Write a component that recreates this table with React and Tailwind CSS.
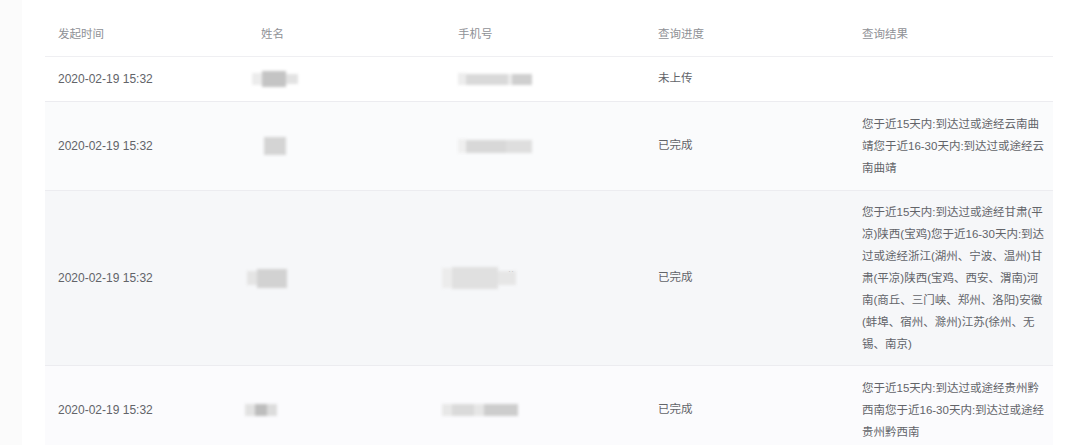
import React from 'react';

const font = "font-['Liberation_Sans','Noto_Sans_CJK_SC',sans-serif]";

// blurred placeholder for masked names / phone numbers
const Masked = ({ parts, className = '' }) => (
  <div className={`flex items-center blur-[1.5px] ${className}`}>
    {parts.map((p, i) => (
      <div key={i} className={p} />
    ))}
  </div>
);

const rows = [
  {
    bg: 'bg-white',
    pad: 'py-[11px]',
    status: '未上传',
    name: (
      <Masked
        className="-ml-[9px]"
        parts={['w-[10px] h-[12px] bg-[#ececec]', 'w-[24px] h-[16px] bg-[#c4c4c4]', 'w-[12px] h-[10px] bg-[#e2e2e2]']}
      />
    ),
    phone: (
      <Masked
        parts={['w-[8px] h-[12px] bg-[#ededed]', 'w-[42px] h-[11px] bg-[#d9d9d9]', 'w-[4px] h-[11px] bg-[#ececec]', 'w-[20px] h-[11px] bg-[#cfcfcf]']}
      />
    ),
    result: [],
  },
  {
    bg: 'bg-[#fafbfc]',
    pad: 'py-[11px]',
    status: '已完成',
    name: <Masked className="ml-[3px]" parts={['w-[22px] h-[18px] bg-[#d4d4d4]']} />,
    phone: (
      <Masked
        parts={['w-[8px] h-[14px] bg-[#efefef]', 'w-[40px] h-[13px] bg-[#d8d8d8]', 'w-[26px] h-[13px] bg-[#dedede]']}
      />
    ),
    result: ['您于近15天内:到达过或途经云南曲', '靖您于近16-30天内:到达过或途经云', '南曲靖'],
  },
  {
    bg: 'bg-[#f6f7f9]',
    pad: 'py-[10px]',
    status: '已完成',
    name: (
      <Masked
        className="-ml-[14px]"
        parts={['w-[10px] h-[14px] bg-[#e4e4e4]', 'w-[30px] h-[19px] bg-[#d2d2d2]']}
      />
    ),
    phone: (
      <div className="flex items-start -ml-[16px]">
        <Masked parts={['w-[10px] h-[20px] bg-[#ececec]', 'w-[46px] h-[22px] bg-[#e0e0e0]', 'w-[18px] h-[14px] bg-[#e6e6e6]']} />
        <span className="text-[9px] leading-[8px] text-[#999] -ml-[8px]">··</span>
      </div>
    ),
    result: [
      '您于近15天内:到达过或途经甘肃(平',
      '凉)陕西(宝鸡)您于近16-30天内:到达',
      '过或途经浙江(湖州、宁波、温州)甘',
      '肃(平凉)陕西(宝鸡、西安、渭南)河',
      '南(商丘、三门峡、郑州、洛阳)安徽',
      '(蚌埠、宿州、滁州)江苏(徐州、无',
      '锡、南京)',
    ],
  },
  {
    bg: 'bg-[#fbfbfd]',
    pad: 'py-[11px]',
    status: '已完成',
    name: (
      <Masked
        className="-ml-[16px]"
        parts={['w-[10px] h-[12px] bg-[#e2e2e2]', 'w-[12px] h-[12px] bg-[#bdbdbd]', 'w-[10px] h-[12px] bg-[#dcdcdc]']}
      />
    ),
    phone: (
      <Masked
        className="-ml-[16px]"
        parts={['w-[10px] h-[12px] bg-[#e8e8e8]', 'w-[22px] h-[12px] bg-[#dadada]', 'w-[10px] h-[12px] bg-[#e6e6e6]', 'w-[34px] h-[12px] bg-[#cdcdcd]']}
      />
    ),
    result: ['您于近15天内:到达过或途经贵州黔', '西南您于近16-30天内:到达过或途经', '贵州黔西南'],
  },
];

const grid = 'grid grid-cols-[203px_197px_200px_204px_204px]';

export default function App() {
  return (
    <div className={`w-[1080px] h-[445px] overflow-hidden bg-white flex ${font}`}>
      <div className="w-[22px] shrink-0 bg-[#fbfbfb]" />
      <div className="pl-[23px]">
        <div className="w-[1008px]">
          <div className={`${grid} h-[57px] pt-[14px] items-center border-b border-[#efeff2] text-[11.5px] text-[#8f9196]`}>
            <div className="px-[13px]">发起时间</div>
            <div className="px-[13px]">姓名</div>
            <div className="px-[13px]">手机号</div>
            <div className="px-[13px]">查询进度</div>
            <div className="px-[13px]">查询结果</div>
          </div>
          {rows.map((r, i) => (
            <div key={i} className={`${grid} items-center border-b border-[#ececf0] ${r.bg} text-[#626469]`}>
              <div className="px-[13px] text-[12px]">2020-02-19 15:32</div>
              <div className="px-[13px]">{r.name}</div>
              <div className="px-[13px]">{r.phone}</div>
              <div className="px-[13px] text-[11.5px]">{r.status}</div>
              <div className={`px-[13px] ${r.pad} text-[11.5px] leading-[22px] min-h-[44px]`}>
                {r.result.map((line, j) => (
                  <div key={j} className="whitespace-nowrap">
                    {line}
                  </div>
                ))}
              </div>
            </div>
          ))}
        </div>
      </div>
    </div>
  );
}
